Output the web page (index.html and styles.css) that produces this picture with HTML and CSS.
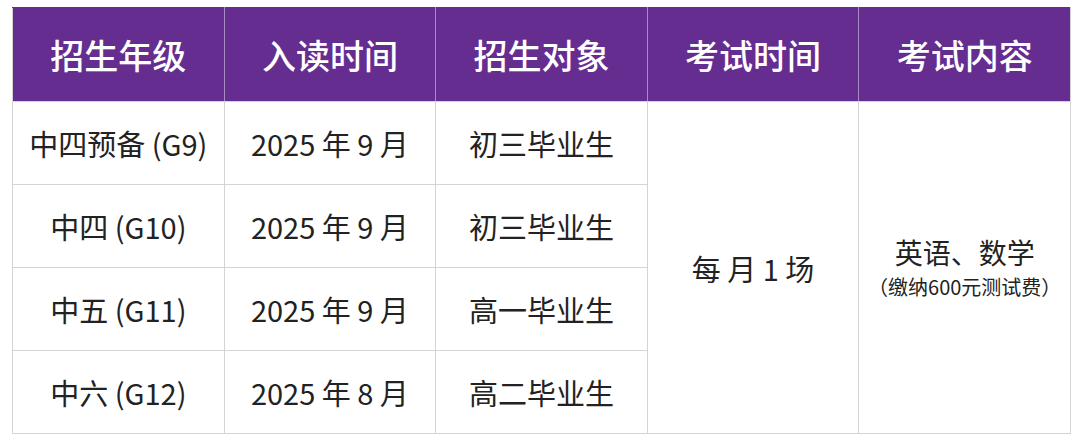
FILE: index.html
```html
<!DOCTYPE html>
<html lang="zh">
<head>
<meta charset="utf-8">
<link rel="stylesheet" href="styles.css">
</head>
<body>
<div class="wrap">
<table class="adm">
  <thead>
    <tr>
      <th>招生年级</th>
      <th>入读时间</th>
      <th>招生对象</th>
      <th>考试时间</th>
      <th>考试内容</th>
    </tr>
  </thead>
  <tbody>
    <tr>
      <td>中四预备 (G9)</td>
      <td>2025 年 9 月</td>
      <td>初三毕业生</td>
      <td rowspan="4">每 月 1 场</td>
      <td rowspan="4"><div class="subj">英语、数学</div><div class="fee">（缴纳600元测试费）</div></td>
    </tr>
    <tr>
      <td>中四 (G10)</td>
      <td>2025 年 9 月</td>
      <td>初三毕业生</td>
    </tr>
    <tr>
      <td>中五 (G11)</td>
      <td>2025 年 9 月</td>
      <td>高一毕业生</td>
    </tr>
    <tr>
      <td>中六 (G12)</td>
      <td>2025 年 8 月</td>
      <td>高二毕业生</td>
    </tr>
  </tbody>
</table>
</div>
</body>
</html>
```
FILE: styles.css
```css
html, body {
  margin: 0;
  padding: 0;
  background: #ffffff;
}
.wrap {
  padding: 7px 0 0 12px;
}
.adm {
  width: 1059px;
  table-layout: fixed;
  border-collapse: collapse;
  font-family: "Noto Sans CJK SC", "Noto Sans", sans-serif;
}
.adm th {
  height: 93px;
  background: #662d91;
  color: #ffffff;
  font-size: 34px;
  font-weight: 500;
  border: 1px solid #a68bc2;
  border-top-color: #662d91;
  border-bottom-color: #d4d4d4;
  padding: 0;
  text-align: center;
  vertical-align: middle;
}
.adm th:first-child { border-left-color: #d4d4d4; }
.adm th:last-child { border-right-color: #d4d4d4; }
.adm td {
  height: 82px;
  border: 1px solid #d4d4d4;
  color: #222222;
  font-size: 29px;
  font-weight: 400;
  padding: 0;
  text-align: center;
  vertical-align: middle;
}
.subj {
  font-size: 28px;
  line-height: 40px;
}
.fee {
  font-size: 20px;
  line-height: 30px;
  padding-bottom: 2px;
}
```
